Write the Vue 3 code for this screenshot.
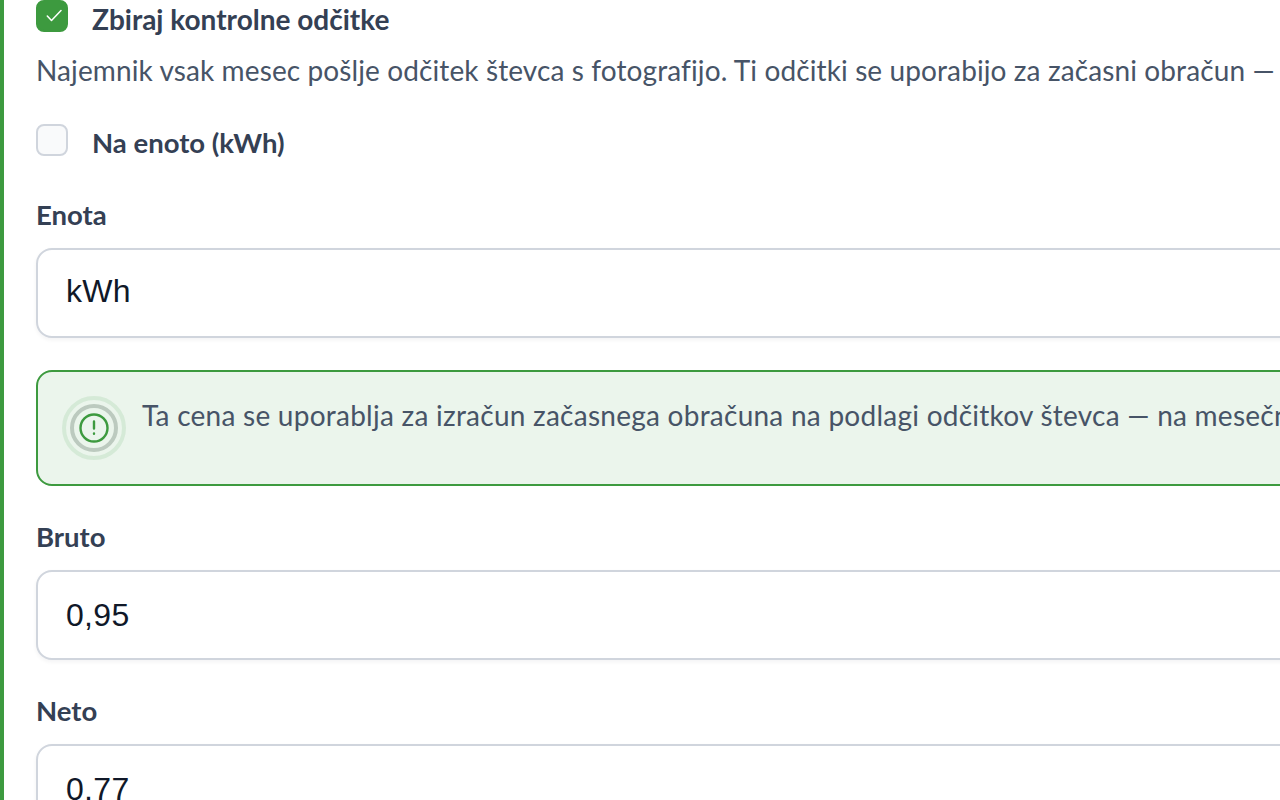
<script setup>
const fields = [
  { label: "Bruto", value: "0,95" },
  { label: "Neto", value: "0,77" },
];
</script>

<template>
  <div class="page">
    <div class="panel">
      <!-- Kontrolni odčitki -->
      <label class="check-row">
        <span class="box box-on">
          <svg width="20" height="20" viewBox="0 0 20 20" fill="none">
            <path d="M5.3 10 9.5 14.5 19 4.5" stroke="#fff" stroke-width="1.5" stroke-linecap="round" stroke-linejoin="round" />
          </svg>
        </span>
        <span class="check-label">Zbiraj kontrolne odčitke</span>
      </label>
      <p class="desc">Najemnik vsak mesec pošlje odčitek števca s fotografijo. Ti odčitki se uporabijo za začasni obračun — končni obračun sledi na podlagi računa.</p>

      <label class="check-row second">
        <span class="box"></span>
        <span class="check-label small">Na enoto (kWh)</span>
      </label>

      <div class="field first">
        <div class="label">Enota</div>
        <input class="input" value="kWh" />
      </div>

      <!-- Obvestilo -->
      <div class="alert">
        <span class="alert-icon">
          <svg width="64" height="64" viewBox="0 0 64 64" fill="none">
            <circle cx="32" cy="32" r="30" stroke="#3d9a3f" stroke-opacity="0.12" stroke-width="4" />
            <circle cx="32" cy="32" r="22" stroke="#bccabf" stroke-width="4" />
            <circle cx="32" cy="32" r="13.5" stroke="#3d9a3f" stroke-width="2.4" />
            <path d="M32 25.5v7M32 37.5v.3" stroke="#3d9a3f" stroke-width="2.4" stroke-linecap="round" />
          </svg>
        </span>
        <p class="alert-text">Ta cena se uporablja za izračun začasnega obračuna na podlagi odčitkov števca — na mesečni ravni, do prejema končnega računa.</p>
      </div>

      <div v-for="f in fields" :key="f.label" class="field">
        <div class="label">{{ f.label }}</div>
        <input class="input" :value="f.value" />
      </div>
    </div>
  </div>
</template>

<style>
html,
body {
  margin: 0;
  overflow: hidden;
  background: #fff;
}
</style>

<style scoped>
.page {
  width: 1280px;
  height: 800px;
  overflow: hidden;
  background: #fff;
}
.panel {
  width: 1500px;
  min-height: 800px;
  box-sizing: border-box;
  border-left: 4px solid #3d9a3f;
  padding-left: 32px;
  font-family: Lato, "Open Sans", sans-serif;
  color: #344054;
}
.check-row {
  display: flex;
  align-items: flex-start;
  gap: 24px;
  height: 38px;
}
.second {
  margin-top: 35px;
}
.box {
  width: 32px;
  height: 32px;
  box-sizing: border-box;
  border: 2px solid #d0d5dd;
  border-radius: 8px;
  background: #f9fafb;
  display: flex;
  align-items: center;
  justify-content: center;
  flex-shrink: 0;
}
.box-on {
  background: #3d9a3f;
  border-color: #3d9a3f;
}
.check-label {
  font-size: 28px;
  font-weight: 700;
  line-height: 38px;
  white-space: nowrap;
  color: #344054;
}
.check-label.small {
  font-size: 27.5px;
}
.desc {
  margin: 15px 0 0;
  font-size: 28px;
  letter-spacing: 0.11px;
  line-height: 35px;
  white-space: nowrap;
  color: #475467;
}
.second {
  margin-top: 36px;
}
.field {
  margin-top: 32px;
}
.field.first {
  margin-top: 34px;
}
.label {
  font-size: 27.5px;
  font-weight: 700;
  line-height: 38px;
  color: #344054;
  margin-bottom: 14px;
}
.input {
  display: block;
  width: 100%;
  height: 90px;
  box-sizing: border-box;
  border: 2px solid #d0d5dd;
  border-radius: 16px;
  padding: 0 28px;
  background: #fff;
  font-family: "Liberation Sans", Arial, sans-serif;
  font-size: 32px;
  letter-spacing: 0.3px;
  color: #101828;
  box-shadow: 0 2px 4px rgba(16, 24, 40, 0.05);
  outline: none;
}
.field.first .input {
  padding-bottom: 4px;
}
.alert {
  display: flex;
  gap: 16px;
  height: 116px;
  box-sizing: border-box;
  margin-top: 32px;
  padding: 24px;
  border: 2px solid #3d9a3f;
  border-radius: 16px;
  background: #ebf5ec;
}
.alert-icon {
  flex-shrink: 0;
  display: flex;
}
.alert-text {
  margin: 1px 0 0;
  font-size: 28px;
  letter-spacing: 0.25px;
  line-height: 36px;
  white-space: nowrap;
  color: #475467;
}
</style>
